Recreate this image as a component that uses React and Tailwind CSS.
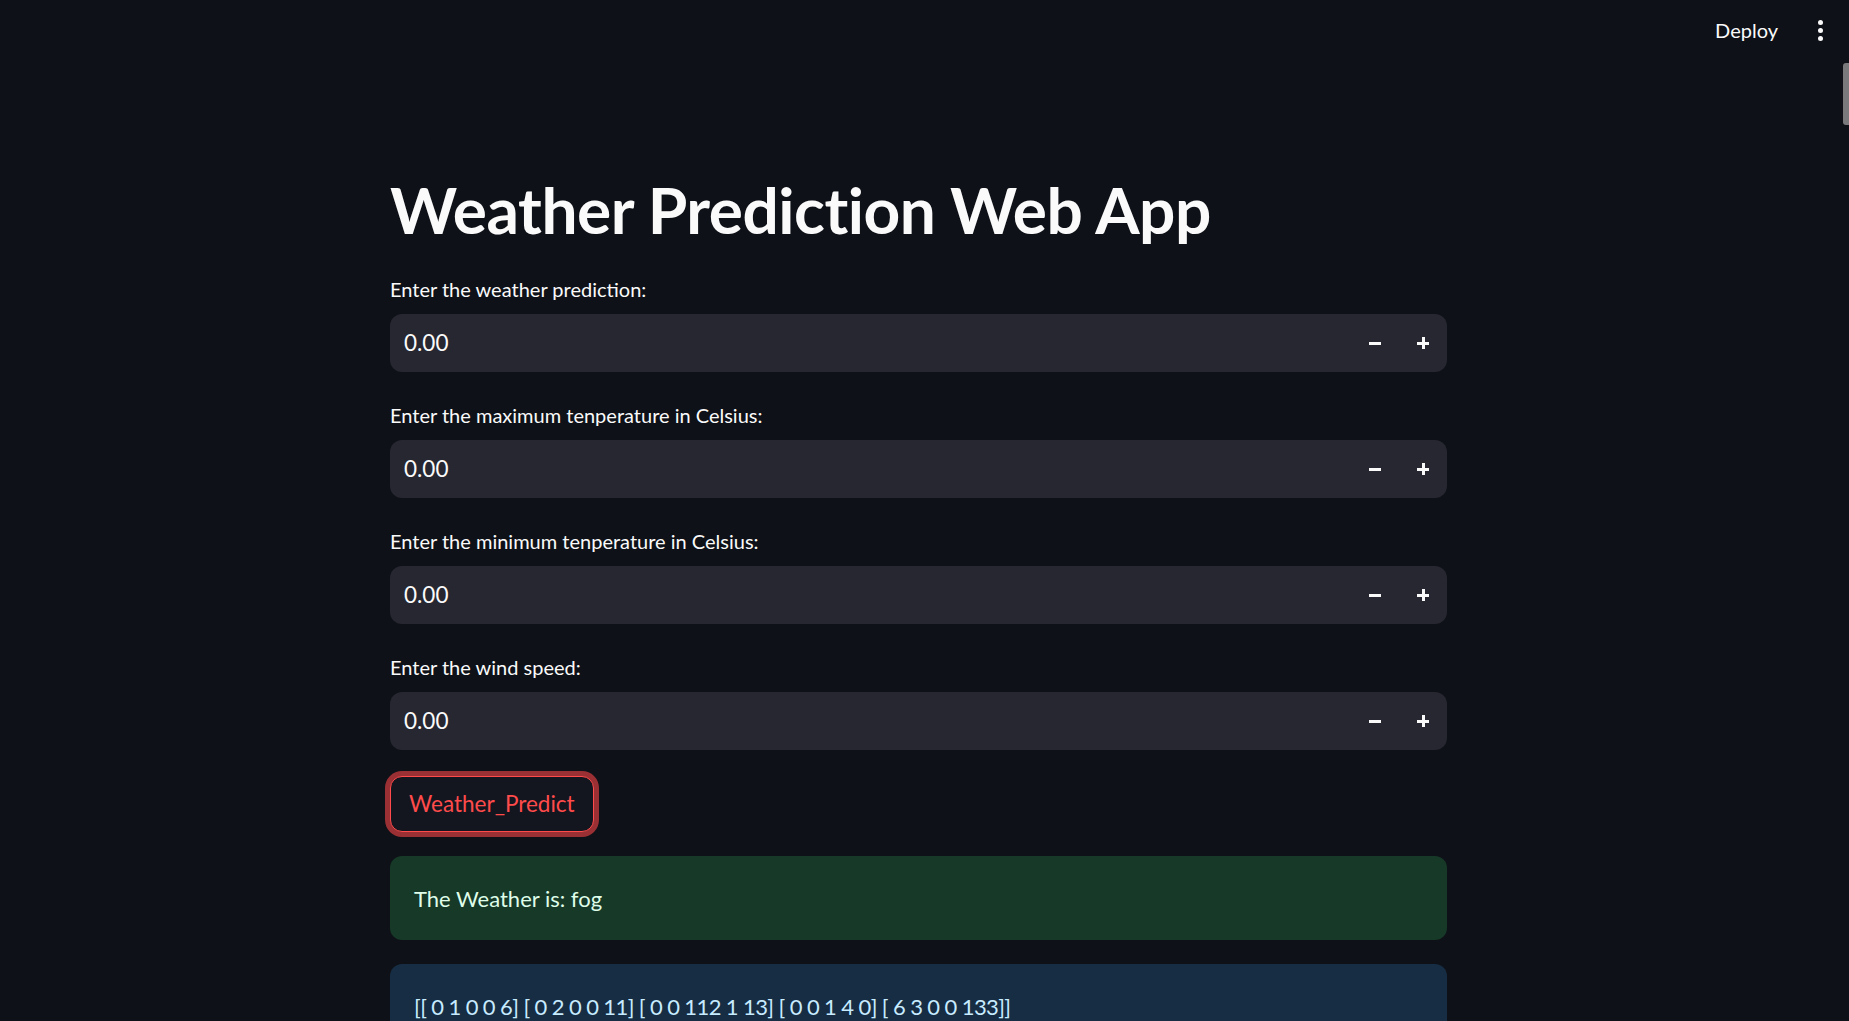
import React from 'react';

const fields = [
    'Enter the weather prediction:',
    'Enter the maximum tenperature in Celsius:',
    'Enter the minimum tenperature in Celsius:',
    'Enter the wind speed:',
];

const NumberInput = ({ label }) => (
    <div className="flex flex-col">
        <label className="text-[20px] leading-[30px] text-[#fafafa] mb-[10px]">{label}</label>
        <div className="h-[58px] rounded-[12px] bg-[#262730] flex items-center pl-[14px]">
            <span className="flex-1 text-[22.5px] text-[#fafafa]">0.00</span>
            <div className="flex items-center">
                <span className="w-[48px] flex justify-center">
                    <span className="block w-[12px] h-[3px] bg-[#fafafa]" />
                </span>
                <span className="w-[48px] flex justify-center relative h-[12px]">
                    <span className="absolute top-[4.5px] w-[12px] h-[3px] bg-[#fafafa]" />
                    <span className="absolute left-[22.5px] top-0 w-[3px] h-[12px] bg-[#fafafa]" />
                </span>
            </div>
        </div>
    </div>
);

const App = () => {
    return (
        <div className="relative min-h-screen w-full bg-[#0e1117] overflow-hidden" style={{ fontFamily: 'Lato, "Noto Sans", sans-serif' }}>

            {/* Header */}
            <div className="h-[60px] flex items-center justify-end pr-[26px]">
                <span className="text-[20px] text-[#fafafa] mr-[40px]">Deploy</span>
                <span className="flex flex-col gap-[3px] items-center">
                    <span className="w-[5px] h-[5px] rounded-full bg-[#fafafa]" />
                    <span className="w-[5px] h-[5px] rounded-full bg-[#fafafa]" />
                    <span className="w-[5px] h-[5px] rounded-full bg-[#fafafa]" />
                </span>
            </div>

            {/* Scrollbar thumb */}
            <div className="absolute right-0 top-[63px] w-[6px] h-[62px] rounded-l-[3px] bg-[#7a7a7c]" />

            {/* Main */}
            <div className="pr-[12px]">
                <div className="w-[1057px] mx-auto pt-[106px]">
                    <h1 className="text-[64px] font-bold leading-[88px] text-[#fafafa] tracking-[-0.5px] mb-[20px]">
                        Weather Prediction Web App
                    </h1>

                    <div className="flex flex-col gap-[28px]">
                        {fields.map((f) => (
                            <NumberInput key={f} label={f} />
                        ))}
                    </div>

                    <button className="mt-[26px] h-[56px] px-[18px] rounded-[12px] border border-[#ff4b4b] bg-[#13161f] text-[#ff4b4b] text-[22.5px] ring-[5px] ring-[#9a3034]">
                        Weather_Predict
                    </button>

                    <div className="mt-[24px] rounded-[12px] bg-[#173928] h-[84px] flex items-center px-[24px]">
                        <span className="text-[22px] text-[#dffde9]">The Weather is: fog</span>
                    </div>

                    <div className="mt-[24px] rounded-[12px] bg-[#172d43] h-[84px] flex items-center px-[24px]">
                        <span className="text-[22px] tracking-[-0.6px] text-[#c7ebff]">[[ 0 1 0 0 6] [ 0 2 0 0 11] [ 0 0 112 1 13] [ 0 0 1 4 0] [ 6 3 0 0 133]]</span>
                    </div>
                </div>
            </div>
        </div>
    );
};

export default App;
